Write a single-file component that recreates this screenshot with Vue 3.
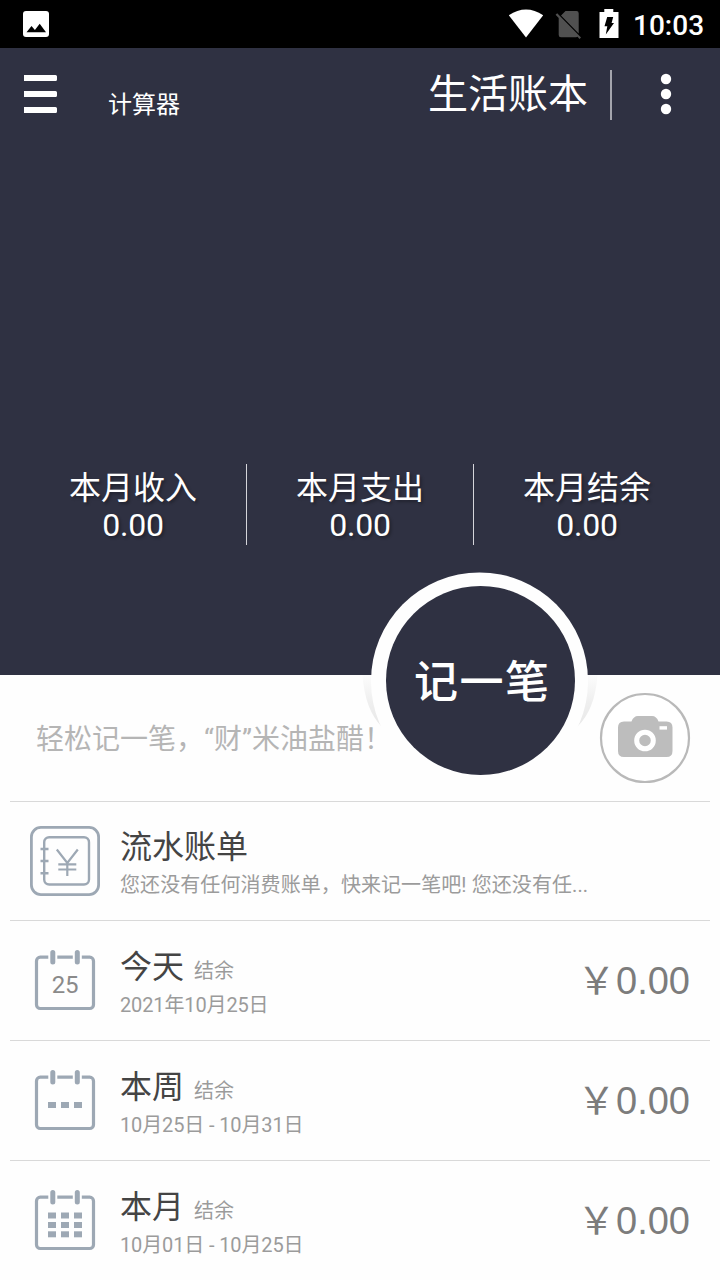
<script setup>
const stats = [
  { label: '本月收入', value: '0.00' },
  { label: '本月支出', value: '0.00' },
  { label: '本月结余', value: '0.00' },
]
const cols = [48, 61, 74]
const periods = [
  { title: '今天', date: '2021年10月25日', day: '25', rows: [] },
  { title: '本周', date: '10月25日 - 10月31日', day: '', rows: [32] },
  { title: '本月', date: '10月01日 - 10月25日', day: '', rows: [22.5, 32, 41.3] },
]
</script>

<template>
  <div class="screen">
    <div class="status">
      <svg class="pic" width="26" height="26" viewBox="0 0 26 26">
        <rect width="26" height="26" rx="3" fill="#fff" />
        <path d="M3.5 21.3 8.5 15l3.4 4 4.8-6.2 6.3 8.5z" fill="#000" />
      </svg>
      <div class="status-right">
        <svg width="36" height="30" viewBox="0 0 36 30">
          <path d="M.8 6.200Q18-5.400 35.200 6.200L18 28.500z" fill="#fff" />
        </svg>
        <svg width="28" height="30" viewBox="0 0 28 30">
          <path d="M10.500 2H21.500a2.200 2.200 0 0 1 2.200 2.200v20.300L6 6.500z" fill="#505050" />
          <path d="M2.200 4.300 26 28.500 24.500 30 22.500 27.800q-.6.400-1.300.4H6a2.300 2.300 0 0 1-2.300-2.300V9L.6 5.800z" fill="#505050" />
        </svg>
        <svg width="20" height="30" viewBox="0 0 20 30">
          <path d="M5.300 0h9v3H19.500v26H.5V3h4.800z" fill="#fff" />
          <path d="M8.200 8h6l-1.600 6h2.400L6.800 25.500l1.500-8.300H5.500z" fill="#000" />
        </svg>
        <span class="clock">10:03</span>
      </div>
    </div>

    <header class="hero">
      <div class="bar">
        <svg class="menu" width="34" height="40" viewBox="0 0 34 40">
          <path d="M0 0h31.500a1.500 1.500 0 0 1 1.500 1.500v3a1.500 1.500 0 0 1-1.500 1.500H0zM0 16h31.500a1.500 1.500 0 0 1 1.500 1.500v3a1.500 1.500 0 0 1-1.500 1.500H0zM0 32h31.500a1.500 1.500 0 0 1 1.500 1.500v3a1.500 1.500 0 0 1-1.500 1.500H0z" fill="#fff" />
        </svg>
        <span class="calc">计算器</span>
        <span class="book">生活账本</span>
        <i class="sep"></i>
        <svg class="more" width="12" height="42" viewBox="0 0 12 42">
          <circle cx="6" cy="6" r="5.200" fill="#fff" />
          <circle cx="6" cy="21" r="5.200" fill="#fff" />
          <circle cx="6" cy="36" r="5.200" fill="#fff" />
        </svg>
      </div>
      <div class="stats">
        <div v-for="s in stats" :key="s.label" class="stat">
          <div class="stat-label">{{ s.label }}</div>
          <div class="stat-value">{{ s.value }}</div>
        </div>
      </div>
    </header>

    <section class="quick">
      <span class="hint">轻松记一笔，“财”米油盐醋！</span>
      <svg class="camera" width="92" height="92" viewBox="0 0 92 92">
        <circle cx="46" cy="46" r="44" fill="#fff" stroke="#b9b9b9" stroke-width="2.200" />
        <path d="M25 29.500h7.500q2-5.500 6.500-5.500h14q4.500 0 6.500 5.500H67.500q6 0 6 6v23.500q0 6-6 6H25q-6 0-6-6V35.500q0-6 6-6z" fill="#bdbdbd" />
        <circle cx="46" cy="48.500" r="8.300" fill="#bdbdbd" stroke="#fff" stroke-width="5" />
        <path d="M60.500 34.200h7.500v3.400h-7.500z" fill="#fff" />
      </svg>
      <div class="record">
        <svg width="240" height="220" viewBox="0 0 240 220">
          <defs>
            <linearGradient id="shade" x1="0" y1="0" x2="0" y2="1">
              <stop offset="0" stop-color="#fcfcfc" />
              <stop offset=".5" stop-color="#efefef" />
              <stop offset="1" stop-color="#e8e8e8" />
            </linearGradient>
          </defs>
          <path d="M2.500 104H12Q12 137 22 156Q5 139 2.500 104z" fill="url(#shade)" />
          <path d="M237.500 104H228Q227 137 217 156Q235 139 237.500 104z" fill="url(#shade)" />
          <circle cx="119.500" cy="110" r="108.500" fill="#fefefe" />
          <circle cx="120.500" cy="109.500" r="94.500" fill="#2f3142" />
        </svg>
        <span class="record-text">记一笔</span>
      </div>
    </section>

    <main class="list">
      <div class="row">
        <svg class="icon" width="70" height="70" viewBox="30 826 70 70" fill="none" stroke="#9da8b4">
          <rect x="31.400" y="827.400" width="67.200" height="67.200" rx="9.500" stroke-width="2.800" />
          <rect x="44.200" y="837.200" width="44.800" height="47.300" rx="5" stroke-width="2.400" />
          <path d="M40.500 849h8M40.500 861h8M40.500 873.200h8" stroke-width="2.400" />
          <path d="M56.800 849.500 67.300 863 77.800 849.500M67.300 862.500v13.500M58.300 864.300h18M58.300 869.500h18" stroke-width="2.200" />
        </svg>
        <div class="info">
          <div class="title">流水账单</div>
          <div class="sub">您还没有任何消费账单，快来记一笔吧! 您还没有任...</div>
        </div>
      </div>
      <div v-for="p in periods" :key="p.title" class="row period">
        <svg class="icon" width="70" height="70" viewBox="26 -5 70 70">
          <rect x="32.500" y="7.200" width="57" height="51.300" rx="3.800" fill="none" stroke="#9da8b4" stroke-width="3.200" />
          <path d="M44.300 4h9v7h-9zM68.800 4h9v7h-9z" fill="#fff" />
          <path d="M48.800 2.500v9.500M73.300 2.500v9.500" stroke="#9da8b4" stroke-width="5" stroke-linecap="round" />
          <text v-if="p.day" x="61" y="43" class="day" text-anchor="middle">{{ p.day }}</text>
          <template v-for="r in p.rows" :key="r">
            <rect v-for="c in cols" :key="c" :x="c - 4" :y="r" width="8" height="6" fill="#9da8b4" />
          </template>
        </svg>
        <div class="info">
          <div class="title">{{ p.title }}<small>结余</small></div>
          <div class="sub">{{ p.date }}</div>
        </div>
        <div class="amount"><span class="yen">￥</span>0.00</div>
      </div>
    </main>
  </div>
</template>

<style>
body { margin: 0; overflow: hidden; }
</style>

<style scoped>
.screen {
  width: 720px;
  height: 1280px;
  overflow: hidden;
  display: flex;
  flex-direction: column;
  background: #fefefe;
  font-family: Roboto, "Noto Sans CJK SC", sans-serif;
}
svg { display: block; flex: none; }
.status {
  flex: none;
  height: 48px;
  box-sizing: border-box;
  padding: 0 16px 0 23px;
  display: flex;
  justify-content: space-between;
  align-items: center;
  background: #000;
}
.status-right { display: flex; align-items: center; color: #fff; }
.status-right svg:nth-child(2) { margin-left: 11px; }
.status-right svg:nth-child(3) { margin-left: 16px; }
.clock { margin-left: 14px; width: 71px; font-size: 28px; font-weight: 500; line-height: 50px; padding-top: 3px; white-space: nowrap; }
.hero {
  flex: none;
  height: 627px;
  display: flex;
  flex-direction: column;
  justify-content: space-between;
  background: #2f3142;
  color: #fff;
}
.bar { display: flex; height: 92px; align-items: center; padding-left: 24px; }
.menu { margin-top: 1px; }
.calc { margin: 22px 0 0 50px; font-size: 24px; line-height: 36px; }
.book { margin-left: auto; font-size: 40px; line-height: 56px; margin-top: 2px; }
.sep { width: 2px; height: 50px; margin: 2px 0 0 22px; background: #a4a5ad; }
.more { margin: 0 48px 0 48px; }
.stats { display: grid; grid-template-columns: 227px 227px 226px; margin: 0 20px 130px; height: 81px; }
.stat { text-align: center; text-shadow: 2px 2px 3px rgba(0, 0, 0, .3); border-right: 1px solid #d5d5da; }
.stat:last-child { border-right: 0; }
.stat-label { font-size: 32px; line-height: 44px; padding-top: 2px; }
.stat-value { font-size: 32px; line-height: 32px; letter-spacing: -.2px; margin-top: -1px; }
.quick { position: relative; flex: none; height: 126px; display: flex; align-items: center; padding: 0 29px 0 36px; justify-content: space-between; }
.hint { font-size: 28px; color: #b5b5b5; white-space: nowrap; margin-top: -2px; }
.record { position: absolute; left: 360px; top: -104px; }
.record-text { position: absolute; left: 54px; top: 82px; color: #fff; font-size: 44px; line-height: 60px; font-weight: 500; letter-spacing: 1.5px; white-space: nowrap; }
.list { flex: none; margin: 0 10px; }
.row { display: flex; height: 118px; border-top: 1px solid #d9d9d9; padding: 0 20px; }
.row.period { height: 119px; }
.icon { margin-top: 24px; }
.info { margin-left: 20px; padding-top: 22px; flex: 1; }
.period .info { padding-top: 23px; }
.title { height: 45px; font-size: 32px; line-height: 46px; color: #444; white-space: nowrap; }
.title small { margin-left: 10px; font-size: 20px; line-height: 20px; color: #9b9b9b; }
.sub { font-size: 20px; line-height: 32px; letter-spacing: .08px; color: #9b9b9b; white-space: nowrap; }
.period .sub { letter-spacing: -.13px; }
.day { font: 24px Roboto, sans-serif; fill: #8a8a8a; letter-spacing: -.3px; }
.amount { font: 38px/120px "Liberation Sans", "Noto Sans CJK SC", sans-serif; color: #7c7c7c; white-space: nowrap; }
.yen { margin-right: .5px; }
</style>
